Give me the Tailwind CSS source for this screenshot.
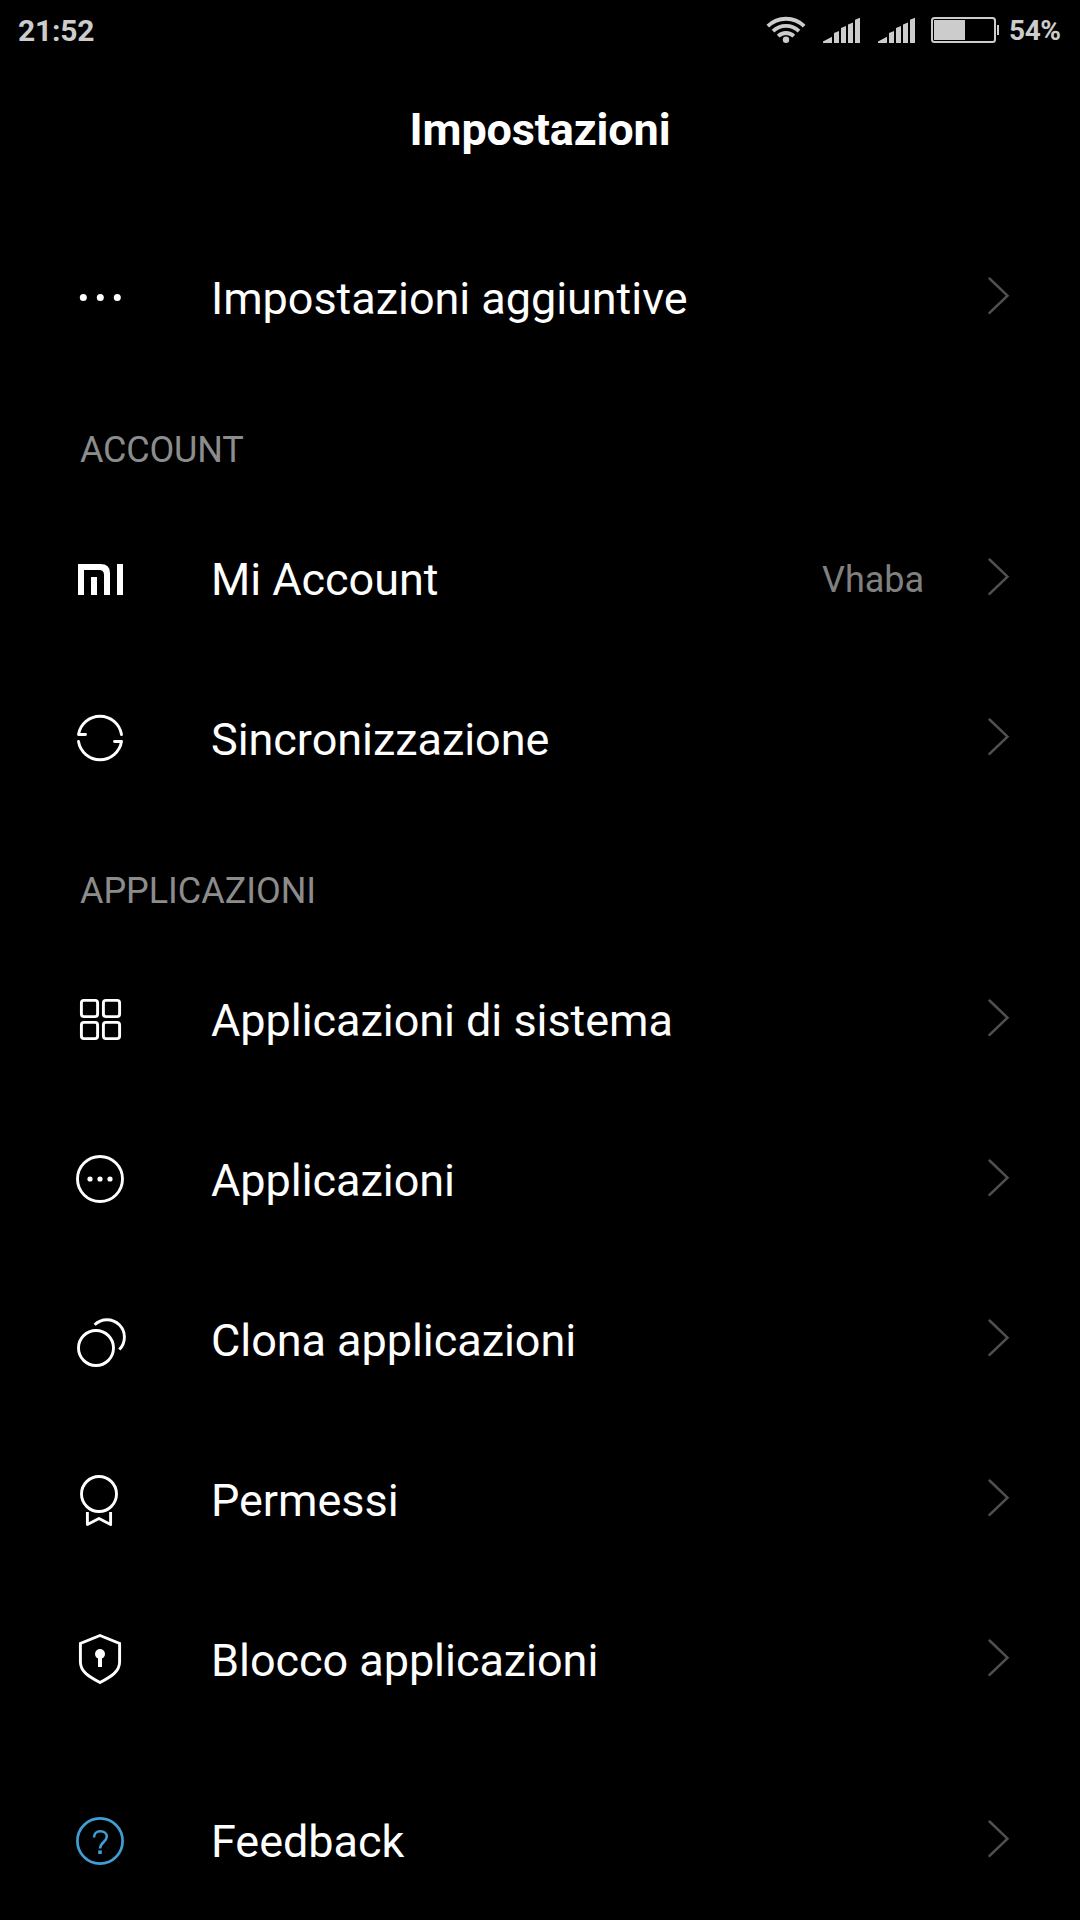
<!DOCTYPE html>
<html lang="it">
<head>
<meta charset="utf-8">
<title>Impostazioni</title>
<script src="https://cdn.jsdelivr.net/npm/@tailwindcss/browser@4"></script>
</head>
<body class="bg-black">
<div class="flex h-[1920px] w-[1080px] flex-col overflow-hidden bg-black font-[Roboto,sans-serif] text-white">
  <header class="flex h-[60px] shrink-0 items-center pl-[18px] font-bold leading-[60px] text-[#cccccc]">
    <span class="pt-[2px] text-[30px] tracking-[-0.2px]">21:52</span>
    <svg class="ml-auto h-[60px] w-[246px] shrink-0" viewBox="-2 0 246 60" fill="none">
      <g stroke="#ccc" stroke-width="3.8">
        <path d="M1.800 26.200a26 26 0 0 1 36.400 0"/>
        <path d="M7 31.200a18.600 18.600 0 0 1 26 0"/>
        <path d="M12.200 36.200a11.100 11.100 0 0 1 15.600 0"/>
      </g>
      <circle cx="20" cy="39.8" r="3.2" fill="#ccc"/>
      <g fill="#ccc">
        <path d="M57 43v-1.5l9-4.8V43zM68 43V33l5-2v12zM75 43V28l5-2v17zM82 43V24.500l5-2V43zM89 43V19.800l5-2V43z"/>
        <path d="M112 43v-1.500l9-4.800V43zM123 43V33l5-2v12zM130 43V28l5-2v17zM137 43V24.500l5-2V43zM144 43V19.800l5-2V43z"/>
        <rect x="168" y="20" width="31" height="20"/>
        <rect x="231" y="25" width="2" height="10"/>
      </g>
      <rect x="166" y="18" width="63" height="24" rx="2.500" stroke="#ccc" stroke-width="2"/>
    </svg>
    <span class="w-[70px] pt-[2px] text-[28px] tracking-[-0.4px]"><span class="-ml-px">54%</span></span>
  </header>
  <h1 class="flex h-[156px] shrink-0 items-start justify-center pt-[43px] text-[45px] font-bold leading-[54px] tracking-[-0.15px]">Impostazioni</h1>
  <main class="flex flex-col text-[45px] leading-[54px] tracking-[-0.05px]">
    <div class="flex h-[160px] items-start px-[60px] pt-[43px]">
      <svg class="mt-px size-[80px] shrink-0" viewBox="0 0 80 80" fill="#fff"><circle cx="23.300" cy="37.500" r="3.500"/><circle cx="40.300" cy="37.500" r="3.500"/><circle cx="57.300" cy="37.500" r="3.500"/></svg>
      <span class="ml-[71px] mt-[13px] flex-1">Impostazioni aggiuntive</span>
      <svg class="h-[80px] w-[40px]" viewBox="0 0 40 80" fill="none" stroke="#505050" stroke-width="2.500" stroke-linecap="round"><path d="M9.500 19.500l18 17.200-18 17.200"/></svg>
    </div>
    <h2 class="h-[121px] pl-[80px] pt-[53px] text-[36px] leading-[43px] tracking-[-0.2px] text-[#8c8c8c]">ACCOUNT</h2>
    <div class="flex h-[160px] items-start px-[60px] pt-[43px]">
      <svg class="size-[80px] shrink-0" viewBox="0 0 80 80" fill="#fff"><path d="M18 55V24h22.500Q50 24 50 33v22h-6V35q0-5-5-5H24v25zM31 37h6v18h-6zM57 24h6v31h-6z"/></svg>
      <span class="ml-[71px] mt-[13px] flex-1">Mi Account</span>
      <span class="mr-[56px] mt-[19px] text-[36px] leading-[43px] text-[#808080]">Vhaba</span>
      <svg class="h-[80px] w-[40px]" viewBox="0 0 40 80" fill="none" stroke="#505050" stroke-width="2.500" stroke-linecap="round"><path d="M9.500 19.500l18 17.200-18 17.200"/></svg>
    </div>
    <div class="flex h-[160px] items-start px-[60px] pt-[43px]">
      <svg class="size-[80px] shrink-0" viewBox="0 0 80 80" fill="none" stroke="#fff" stroke-width="2.900" stroke-linecap="round" stroke-linejoin="round"><path d="M25.500 34.500h-7a21.800 21.800 0 0 1 43 0"/><path d="M54.500 41.500h7a21.800 21.800 0 0 1-43 0"/></svg>
      <span class="ml-[71px] mt-[13px] flex-1">Sincronizzazione</span>
      <svg class="h-[80px] w-[40px]" viewBox="0 0 40 80" fill="none" stroke="#505050" stroke-width="2.500" stroke-linecap="round"><path d="M9.500 19.500l18 17.200-18 17.200"/></svg>
    </div>
    <h2 class="h-[121px] pl-[80px] pt-[53px] text-[36px] leading-[43px] text-[#8c8c8c]">APPLICAZIONI</h2>
    <div class="flex h-[160px] items-start px-[60px] pt-[43px]">
      <svg class="-mt-px size-[80px] shrink-0" viewBox="0 0 80 80" fill="none" stroke="#fff" stroke-width="2.900"><rect x="21.400" y="20.400" width="16.200" height="16.200" rx="2.500"/><rect x="43.400" y="20.400" width="16.200" height="16.200" rx="2.500"/><rect x="21.400" y="42.400" width="16.200" height="16.200" rx="2.500"/><rect x="43.400" y="42.400" width="16.200" height="16.200" rx="2.500"/></svg>
      <span class="ml-[71px] mt-[13px] flex-1">Applicazioni di sistema</span>
      <svg class="h-[80px] w-[40px]" viewBox="0 0 40 80" fill="none" stroke="#505050" stroke-width="2.500" stroke-linecap="round"><path d="M9.500 19.500l18 17.200-18 17.200"/></svg>
    </div>
    <div class="flex h-[160px] items-start px-[60px] pt-[43px]">
      <svg class="-mt-px size-[80px] shrink-0" viewBox="0 0 80 80" fill="#fff"><circle cx="40" cy="39" r="22.500" fill="none" stroke="#fff" stroke-width="2.900"/><circle cx="30" cy="39" r="2.600"/><circle cx="40" cy="39" r="2.600"/><circle cx="50" cy="39" r="2.600"/></svg>
      <span class="ml-[71px] mt-[13px] flex-1">Applicazioni</span>
      <svg class="h-[80px] w-[40px]" viewBox="0 0 40 80" fill="none" stroke="#505050" stroke-width="2.500" stroke-linecap="round"><path d="M9.500 19.500l18 17.200-18 17.200"/></svg>
    </div>
    <div class="flex h-[160px] items-start px-[60px] pt-[43px]">
      <svg class="-mt-px size-[80px] shrink-0" viewBox="0 0 80 80" fill="none" stroke="#fff" stroke-width="2.900"><circle cx="36" cy="48" r="17.500"/><path d="M34.600 24.800A17.300 17.300 0 0 1 59.300 49.500"/></svg>
      <span class="ml-[71px] mt-[13px] flex-1">Clona applicazioni</span>
      <svg class="h-[80px] w-[40px]" viewBox="0 0 40 80" fill="none" stroke="#505050" stroke-width="2.500" stroke-linecap="round"><path d="M9.500 19.500l18 17.200-18 17.200"/></svg>
    </div>
    <div class="flex h-[160px] items-start px-[60px] pt-[43px]">
      <svg class="-mt-px size-[80px] shrink-0" viewBox="0 0 80 80" fill="none" stroke="#fff" stroke-width="2.900" stroke-linejoin="round"><circle cx="39" cy="34" r="17.500"/><path d="M27.400 52v12.500L39 58.500l11.600 6V52"/></svg>
      <span class="ml-[71px] mt-[13px] flex-1">Permessi</span>
      <svg class="h-[80px] w-[40px]" viewBox="0 0 40 80" fill="none" stroke="#505050" stroke-width="2.500" stroke-linecap="round"><path d="M9.500 19.500l18 17.200-18 17.200"/></svg>
    </div>
    <div class="flex h-[160px] items-start px-[60px] pt-[43px]">
      <svg class="-mt-px size-[80px] shrink-0" viewBox="0 0 80 80" fill="none" stroke="#fff" stroke-width="2.900"><path d="M40 15.500l19.600 8V42c0 9.500-8.400 14.500-19.600 20.500C28.800 56.500 20.400 51.500 20.400 42V23.500z"/><circle cx="40" cy="34" r="5" fill="#fff" stroke="none"/><rect x="38" y="36" width="4" height="11" fill="#fff" stroke="none"/></svg>
      <span class="ml-[71px] mt-[13px] flex-1">Blocco applicazioni</span>
      <svg class="h-[80px] w-[40px]" viewBox="0 0 40 80" fill="none" stroke="#505050" stroke-width="2.500" stroke-linecap="round"><path d="M9.500 19.500l18 17.200-18 17.200"/></svg>
    </div>
    <div class="mt-[21px] flex h-[160px] items-start px-[60px] pt-[43px]">
      <svg class="size-[80px] shrink-0" viewBox="0 0 80 80" fill="none" stroke="#3d9fd3" stroke-width="2.700"><circle cx="40" cy="39" r="22.600"/><path d="M34 35.500c0-4 2.600-6.200 6.300-6.200s6.500 2 6.500 5.300c0 5.200-6.700 5.700-6.700 12" stroke-width="2.600"/><path d="M38.200 48.400h3.600v3.600h-3.600z" fill="#3d9fd3" stroke="none"/></svg>
      <span class="ml-[71px] mt-[13px] flex-1">Feedback</span>
      <svg class="h-[80px] w-[40px]" viewBox="0 0 40 80" fill="none" stroke="#505050" stroke-width="2.500" stroke-linecap="round"><path d="M9.500 19.500l18 17.200-18 17.200"/></svg>
    </div>
  </main>
</div>
</body>
</html>
